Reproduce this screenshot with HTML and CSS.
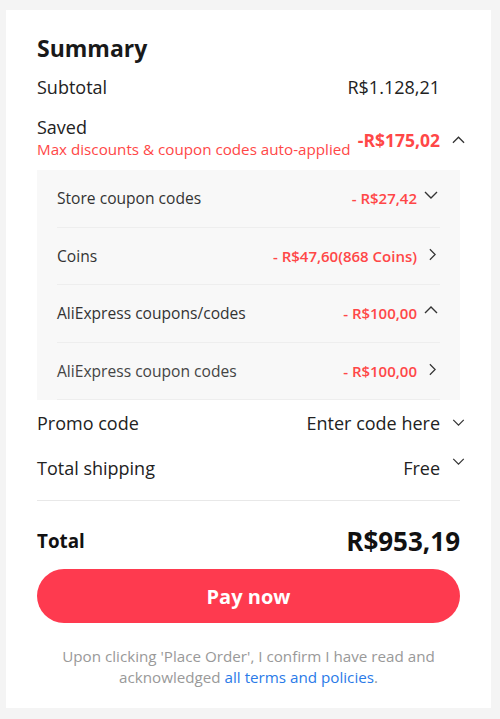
FILE: index.html
```html
<!DOCTYPE html>
<html>
<head>
<meta charset="utf-8">
<link rel="stylesheet" href="styles.css">
</head>
<body>
<div class="card">
  <h1 class="title">Summary</h1>
  <div class="row subtotal">
    <span>Subtotal</span>
    <span>R$1.128,21</span>
  </div>
  <div class="row saved">
    <div class="saved-left">
      <div class="saved-label">Saved</div>
      <div class="saved-note">Max discounts &amp; coupon codes auto-applied</div>
    </div>
    <div class="saved-right">
      <span class="saved-value">-R$175,02</span>
      <svg class="chev out" viewBox="0 0 14 8"><path d="M1 7L7 1L13 7"/></svg>
    </div>
  </div>
  <div class="details">
    <div class="drow">
      <span class="dlabel">Store coupon codes</span>
      <span class="dright"><span class="dval">- R$27,42</span><svg class="chev sub raise" viewBox="0 0 14 8"><path d="M1 1L7 7L13 1"/></svg></span>
    </div>
    <div class="drow">
      <span class="dlabel">Coins</span>
      <span class="dright"><span class="dval">- R$47,60(868 Coins)</span><svg class="chev subr" viewBox="0 0 8 14"><path d="M1 1L7 7L1 13"/></svg></span>
    </div>
    <div class="drow">
      <span class="dlabel">AliExpress coupons/codes</span>
      <span class="dright"><span class="dval">- R$100,00</span><svg class="chev sub raise" viewBox="0 0 14 8"><path d="M1 7L7 1L13 7"/></svg></span>
    </div>
    <div class="drow">
      <span class="dlabel light">AliExpress coupon codes</span>
      <span class="dright"><span class="dval">- R$100,00</span><svg class="chev subr" viewBox="0 0 8 14"><path d="M1 1L7 7L1 13"/></svg></span>
    </div>
  </div>
  <div class="row opt">
    <span>Promo code</span>
    <span class="opt-right">Enter code here<svg class="chev out small" viewBox="0 0 14 8"><path d="M1 1L7 7L13 1"/></svg></span>
  </div>
  <div class="row opt">
    <span>Total shipping</span>
    <span class="opt-right">Free<svg class="chev out small up" viewBox="0 0 14 8"><path d="M1 1L7 7L13 1"/></svg></span>
  </div>
  <div class="row total">
    <span class="total-label">Total</span>
    <span class="total-value">R$953,19</span>
  </div>
  <button class="pay">Pay now</button>
  <p class="note">Upon clicking 'Place Order', I confirm I have read and acknowledged <a class="link">all terms and policies</a>.</p>
</div>
</body>
</html>
```
FILE: styles.css
```css
html, body {
  margin: 0;
  padding: 0;
  background: #f4f4f4;
  font-family: "Open Sans", "Noto Sans", sans-serif;
  color: #222;
}
.card {
  background: #fff;
  margin: 10px 9px 0 6px;
  padding: 23px 31px 20px 31px;
  height: 698px;
  box-sizing: border-box;
}
.title {
  margin: 0;
  font-size: 23px;
  line-height: 30px;
  font-weight: 700;
  color: #191919;
}
.row {
  display: flex;
  justify-content: space-between;
  align-items: center;
}
.subtotal {
  margin-top: 12px;
  font-size: 18px;
  line-height: 24px;
  color: #222;
  padding-right: 20px;
}
.saved {
  margin-top: 16px;
  align-items: flex-start;
}
.saved-label {
  font-size: 18px;
  line-height: 24px;
}
.saved-note {
  font-size: 15.2px;
  line-height: 20px;
  color: #ff4747;
}
.saved-right {
  display: flex;
  align-items: center;
  margin-top: 13px;
  margin-right: -5px;
}
.saved-value {
  color: #ff4747;
  font-weight: 700;
  font-size: 17.5px;
  line-height: 24px;
}
.chev {
  fill: none;
  stroke: #333;
  stroke-width: 1.4;
}
.chev.out {
  width: 13px;
  height: 8px;
  margin-left: 12px;
}
.chev.small { width: 13px; height: 7px; }
.chev.up { position: relative; top: -6px; }
.details {
  margin-top: 11px;
  background: #f8f8f8;
  padding: 0 20px;
}
.drow {
  height: 57.5px;
  box-sizing: border-box;
  border-bottom: 1px solid #eeeeee;
  display: flex;
  justify-content: space-between;
  align-items: center;
  font-size: 15.6px;
}
.dlabel { color: #333; }
.dlabel.light { color: #444; }
.dright {
  display: flex;
  align-items: center;
}
.dval {
  color: #ff4747;
  font-weight: 600;
  font-size: 15px;
}
.chev.sub {
  width: 14px;
  height: 8px;
  margin-left: 7px;
  margin-right: 2px;
}
.chev.raise { position: relative; top: -3px; }
.chev.subr {
  width: 7px;
  height: 13px;
  margin-left: 12px;
  margin-right: 4px;
  position: relative;
  top: -1px;
}
.opt {
  height: 45px;
  font-size: 18px;
}
.opt-right {
  display: flex;
  align-items: center;
  margin-right: -5px;
}
.total {
  margin-top: 10px;
  border-top: 1px solid #e8e8e8;
  padding-top: 24px;
  height: 32px;
  box-sizing: content-box;
}
.total-label {
  font-size: 18.8px;
  font-weight: 700;
  color: #111;
}
.total-value {
  font-size: 26px;
  font-weight: 700;
  color: #111;
}
.pay {
  display: block;
  width: 100%;
  margin-top: 12px;
  height: 54px;
  border: none;
  border-radius: 27px;
  background: #fe3a4f;
  color: #fff;
  font-family: inherit;
  font-size: 20px;
  font-weight: 700;
}
.note {
  margin: 23px 0 0 0;
  text-align: center;
  font-size: 15.2px;
  line-height: 21px;
  color: #999;
  padding: 0 8px;
}
.link {
  color: #2a7ae8;
}
```
